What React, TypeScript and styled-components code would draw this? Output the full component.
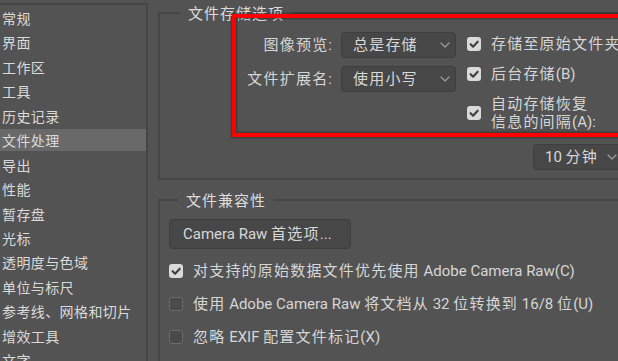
import React from 'react';
import styled, { createGlobalStyle } from 'styled-components';

const GlobalStyle = createGlobalStyle`
  html, body {
    margin: 0;
    padding: 0;
    background: #535353;
    overflow: hidden;
  }
  * {
    box-sizing: border-box;
  }
`;

const Page = styled.div`
  position: relative;
  display: flex;
  width: 618px;
  height: 361px;
  overflow: hidden;
  background: #535353;
  color: #d6d6d6;
  font-family: Roboto, 'Noto Sans CJK SC', sans-serif;
  font-size: 15px;
  line-height: 20px;
`;

const Sidebar = styled.ul`
  flex: 0 0 148px;
  margin: 3px 0 0;
  padding: 2px 0 0;
  list-style: none;
  border-top: 2px solid #464646;
  border-right: 2px solid #464646;
  font-family: 'Noto Sans CJK SC', sans-serif;
  font-size: 14px;
  letter-spacing: 0.4px;
`;

const NavItem = styled.li<{ $active?: boolean }>`
  height: 22px;
  margin-bottom: 2.45px;
  padding-left: 2px;
  line-height: 22px;
  white-space: nowrap;
  color: #dadada;
  background: ${({ $active }) => ($active ? '#696969' : 'transparent')};
`;

const Main = styled.main`
  flex: 0 0 560px;
  padding: 3px 0 0 10px;
`;

const Group = styled.fieldset<{ $gap?: number }>`
  margin: ${({ $gap }) => $gap ?? 0}px 0 0;
  padding: 0;
  min-width: 0;
  border: 2px solid #464646;
`;

const Legend = styled.legend<{ $offset: number }>`
  margin-left: ${({ $offset }) => $offset}px;
  padding: 0 8px;
  line-height: 20px;
  font-family: 'Noto Sans CJK SC', sans-serif;
  font-size: 15px;
  letter-spacing: 1px;
  color: #dcdcdc;
`;

const StorageBody = styled.div`
  display: flex;
  align-items: flex-start;
  padding: 9px 0 8px;
`;

const FieldGrid = styled.div`
  display: grid;
  grid-template-columns: 172px 115px;
  grid-auto-rows: 26px;
  column-gap: 9px;
  row-gap: 8px;
`;

const Label = styled.label`
  align-self: center;
  text-align: right;
  white-space: nowrap;
`;

const SelectBox = styled.div<{ $width: number }>`
  display: flex;
  align-items: center;
  justify-content: space-between;
  width: ${({ $width }) => $width}px;
  height: 26px;
  padding: 0 5px 0 11px;
  background: #474747;
  border: 1px solid #3e3e3e;
  border-radius: 4px;
  white-space: nowrap;
  color: #d8d8d8;
`;

const OptionColumn = styled.div`
  display: flex;
  flex-direction: column;
  gap: 10.5px;
  margin: 1.5px 0 0 11px;
`;

const CheckRow = styled.div`
  display: flex;
  align-items: center;
  gap: 10px;
  min-height: 20px;
  line-height: 20px;
  white-space: nowrap;
`;

const TwoLine = styled.span`
  line-height: 18px;
`;

const IntervalSelect = styled.div`
  margin: 3px 0 0 66px;
`;

const CompatBody = styled.div`
  display: flex;
  flex-direction: column;
  align-items: flex-start;
  gap: 13px;
  padding: 9px 0 20px 9px;
`;

const Button = styled.button`
  display: inline-flex;
  align-items: center;
  width: 182px;
  height: 30px;
  margin-bottom: -1px;
  padding: 0 0 0 13px;
  background: #474747;
  border: 1px solid #3e3e3e;
  border-radius: 4px;
  color: #d8d8d8;
  font: inherit;
  white-space: nowrap;
`;

const Box = styled.span<{ $checked: boolean }>`
  flex: 0 0 14px;
  display: inline-flex;
  align-items: center;
  justify-content: center;
  width: 14px;
  height: 14px;
  border-radius: 3px;
  background: ${({ $checked }) => ($checked ? '#dadada' : '#4a4a4a')};
  border: ${({ $checked }) => ($checked ? 'none' : '1.5px solid #6c6c6c')};
`;

const Han = styled.span`
  letter-spacing: 1.2px;
`;

const Highlight = styled.div`
  position: absolute;
  left: 232px;
  top: 14px;
  width: 420px;
  height: 123px;
  border: 4px solid #ff0000;
  box-shadow: 0 0 2px 1px rgba(0, 0, 0, 0.35), inset 0 0 2px 1px rgba(0, 0, 0, 0.35);
  pointer-events: none;
`;

const CJK = /([\u2E80-\u9FFF\u3000-\u303F\uFF00-\uFFEF]+)/;

const Txt = ({ children }: { children: string }) => (
  <span>
    {children.split(CJK).map((part, i) =>
      CJK.test(part) ? <Han key={i}>{part}</Han> : <React.Fragment key={i}>{part}</React.Fragment>,
    )}
  </span>
);

const Chevron = () => (
  <svg width="10" height="6" viewBox="0 0 10 6" fill="none">
    <path d="M1 1l4 4 4-4" stroke="#9c9c9c" strokeWidth="1.2" strokeLinecap="round" strokeLinejoin="round" />
  </svg>
);

const Checkbox = ({ checked }: { checked: boolean }) => (
  <Box $checked={checked}>
    {checked && (
      <svg width="14" height="14" viewBox="0 0 14 14" fill="none">
        <path d="M3.6 7.2l2.5 2.5 4.6-5" stroke="#3f3f3f" strokeWidth="2.1" strokeLinecap="round" strokeLinejoin="round" />
      </svg>
    )}
  </Box>
);

const Select = ({ value, width }: { value: string; width: number }) => (
  <SelectBox $width={width}>
    <Txt>{value}</Txt>
    <Chevron />
  </SelectBox>
);

const navItems = [
  '常规',
  '界面',
  '工作区',
  '工具',
  '历史记录',
  '文件处理',
  '导出',
  '性能',
  '暂存盘',
  '光标',
  '透明度与色域',
  '单位与标尺',
  '参考线、网格和切片',
  '增效工具',
  '文字',
];

const compatOptions = [
  { text: '对支持的原始数据文件优先使用 Adobe Camera Raw(C)', checked: true },
  { text: '使用 Adobe Camera Raw 将文档从 32 位转换到 16/8 位(U)', checked: false },
  { text: '忽略 EXIF 配置文件标记(X)', checked: false },
];

export default function App() {
  return (
    <>
      <GlobalStyle />
      <Page>
        <Sidebar>
          {navItems.map((item) => (
            <NavItem key={item} $active={item === '文件处理'}>
              {item}
            </NavItem>
          ))}
        </Sidebar>

        <Main>
          <Group>
            <Legend $offset={20}>文件存储选项</Legend>
            <StorageBody>
              <FieldGrid>
                <Label>
                  <Txt>图像预览:</Txt>
                </Label>
                <Select value="总是存储" width={115} />
                <Label>
                  <Txt>文件扩展名:</Txt>
                </Label>
                <Select value="使用小写" width={115} />
              </FieldGrid>

              <OptionColumn>
                <CheckRow>
                  <Checkbox checked />
                  <Txt>存储至原始文件夹</Txt>
                </CheckRow>
                <CheckRow>
                  <Checkbox checked />
                  <Txt>后台存储(B)</Txt>
                </CheckRow>
                <CheckRow>
                  <Checkbox checked />
                  <TwoLine>
                    <Txt>自动存储恢复</Txt>
                    <br />
                    <Txt>信息的间隔(A):</Txt>
                  </TwoLine>
                </CheckRow>
                <IntervalSelect>
                  <Select value="10 分钟" width={90} />
                </IntervalSelect>
              </OptionColumn>
            </StorageBody>
          </Group>

          <Group $gap={10}>
            <Legend $offset={18}>文件兼容性</Legend>
            <CompatBody>
              <Button>
                <Txt>Camera Raw 首选项...</Txt>
              </Button>
              {compatOptions.map((opt) => (
                <CheckRow key={opt.text}>
                  <Checkbox checked={opt.checked} />
                  <Txt>{opt.text}</Txt>
                </CheckRow>
              ))}
            </CompatBody>
          </Group>
        </Main>

        <Highlight />
      </Page>
    </>
  );
}
